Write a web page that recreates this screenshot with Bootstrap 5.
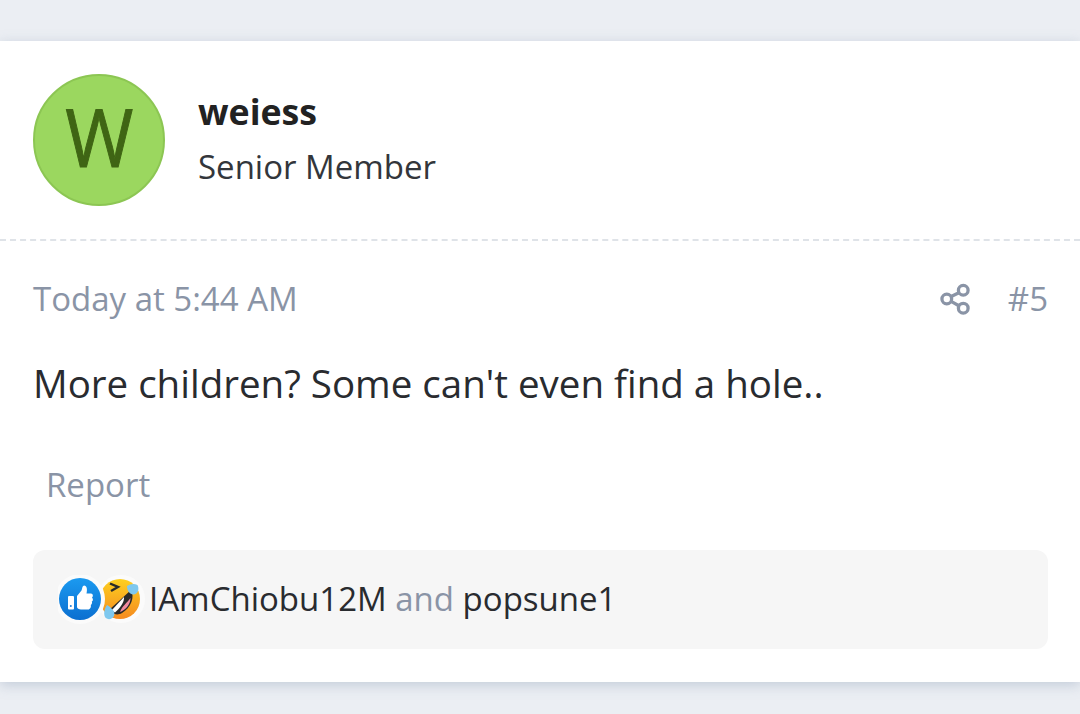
<!DOCTYPE html>
<html lang="en">
<head>
<meta charset="utf-8">
<title>Post</title>
<link rel="stylesheet" href="https://cdn.jsdelivr.net/npm/bootstrap@5.3.0/dist/css/bootstrap.min.css">
<style>
html,body{height:714px;overflow:hidden}
body{background:#ebeef3;font-family:"Open Sans",sans-serif;color:#292b2f;padding-top:41px}
.post-card{height:641px;background:#fff;box-shadow:0 3px 12px rgba(120,140,170,.35)}
.post-head{height:200px;padding:33px 33px 0;border-bottom:2px dashed #dfe3e8}
.ava{width:132px;height:132px;background:#9bd75f;border:2px solid #8cc653;color:#3f6514;font-size:81px;line-height:1;padding-bottom:9px}
.ava-l{display:inline-block;transform:scaleX(.91);-webkit-text-stroke:1px #3f6514}
.who{padding-left:33px;padding-top:15px}
.uname{font-size:35.700px;font-weight:700;line-height:44px;color:#222}
.urole{font-size:33px;line-height:44px;margin-top:12px;color:#33363b}
.meta-row{padding:36px 32px 0 33px;height:78px;color:#8a94a6;font-size:33px;line-height:44px}
.shr{width:31px;height:32px;margin-right:37px;margin-top:-1px}
.msg{padding:0 33px;margin-top:39px;font-size:38.500px;line-height:50px}
.rep{padding:0 46px;margin-top:55px;font-size:33px;line-height:44px;color:#8a94a6}
.reacts{margin:43px 32px 0 33px;height:99px;background:#f6f6f6;border-radius:12px;padding-left:25px;font-size:33px;line-height:44px}
.reacts .andw{color:#8a94a6}
.rnames{margin-top:-1px}
.ric{width:90px;height:50px;margin-right:1px;flex:none}
</style>
</head>
<body>
<div class="post-card">
  <div class="post-head d-flex align-items-start">
    <div class="ava rounded-circle d-flex align-items-center justify-content-center"><span class="ava-l">W</span></div>
    <div class="who">
      <div class="uname">weiess</div>
      <div class="urole">Senior Member</div>
    </div>
  </div>
  <div class="meta-row d-flex justify-content-between align-items-start">
    <div>Today at 5:44 AM</div>
    <div class="d-flex align-items-center">
      <svg class="shr" viewBox="0 0 32 32" fill="none" stroke="#8a94a6" stroke-width="3.400"><circle cx="24" cy="7" r="5"/><circle cx="7" cy="16" r="5"/><circle cx="24" cy="25.500" r="5"/><path d="M11.500 13.500 19.500 9.500M11.500 18.500 19.500 23"/></svg>
      <span>#5</span>
    </div>
  </div>
  <div class="msg">More children? Some can't even find a hole..</div>
  <div class="rep">Report</div>
  <div class="reacts d-flex align-items-center">
    <svg class="ric" viewBox="0 0 90 50">
      <defs>
        <linearGradient id="bl" x1="0" y1="0" x2="0" y2="1"><stop offset="0" stop-color="#1b9af0"/><stop offset="1" stop-color="#0b6fd0"/></linearGradient>
        <linearGradient id="yl" x1="0" y1="0" x2="0" y2="1"><stop offset="0" stop-color="#fdd020"/><stop offset="1" stop-color="#f58a1f"/></linearGradient>
      </defs>
      <circle cx="63" cy="24" r="24" fill="#fbfbfb"/>
      <circle cx="62" cy="24" r="20" fill="url(#yl)"/>
      <circle cx="22" cy="24" r="25" fill="#fbfbfb"/>
      <circle cx="22" cy="24" r="21" fill="url(#bl)"/>
      <rect x="10" y="21" width="6" height="13.500" rx="1" fill="#fff"/>
      <circle cx="12.800" cy="31" r="1" fill="#1b7fdc"/>
      <path d="M19 21 23.500 15.500C24.500 13 24 11 26 10.500 29 10.500 29.500 14.500 28.500 18.500H33C35 18.500 35.500 21.500 34 22.500 35.500 24 35 26 33.800 26.500 34.500 28 33.500 29.500 32.800 30 33.300 32 32.300 34.500 30 34.500H23C21 34.500 19 33.500 19 32Z" fill="#fff"/>
      <path d="M51 35 73 15C77 22 73 33 64 38 59 41 54 39 51 35Z" fill="#2a2a2a"/>
      <path d="M53.500 35.500 66 22C66.500 27 62 33 57 37.500Z" fill="#fff"/>
      <path d="M62 37C64 31 69 28 72.500 23 72.500 29 68 35 62 37Z" fill="#ef8aa0"/>
      <path d="M52 8.500 60 12 53 16" fill="none" stroke="#2a2a2a" stroke-width="2.400"/>
      <path d="M69 11C72 9 76 8 79.500 10 81.500 14 80 19 76 19.500 72 20 69 16 69 11Z" fill="#7fc8ee"/>
      <path d="M49 30C52 32 58 36 56 41 54 45 49 45 47 42 45 38 47 33 49 30Z" fill="#7fc8ee"/>
    </svg>
    <span class="rnames">IAmChiobu12M <span class="andw">and</span> popsune1</span>
  </div>
</div>
</body>
</html>
